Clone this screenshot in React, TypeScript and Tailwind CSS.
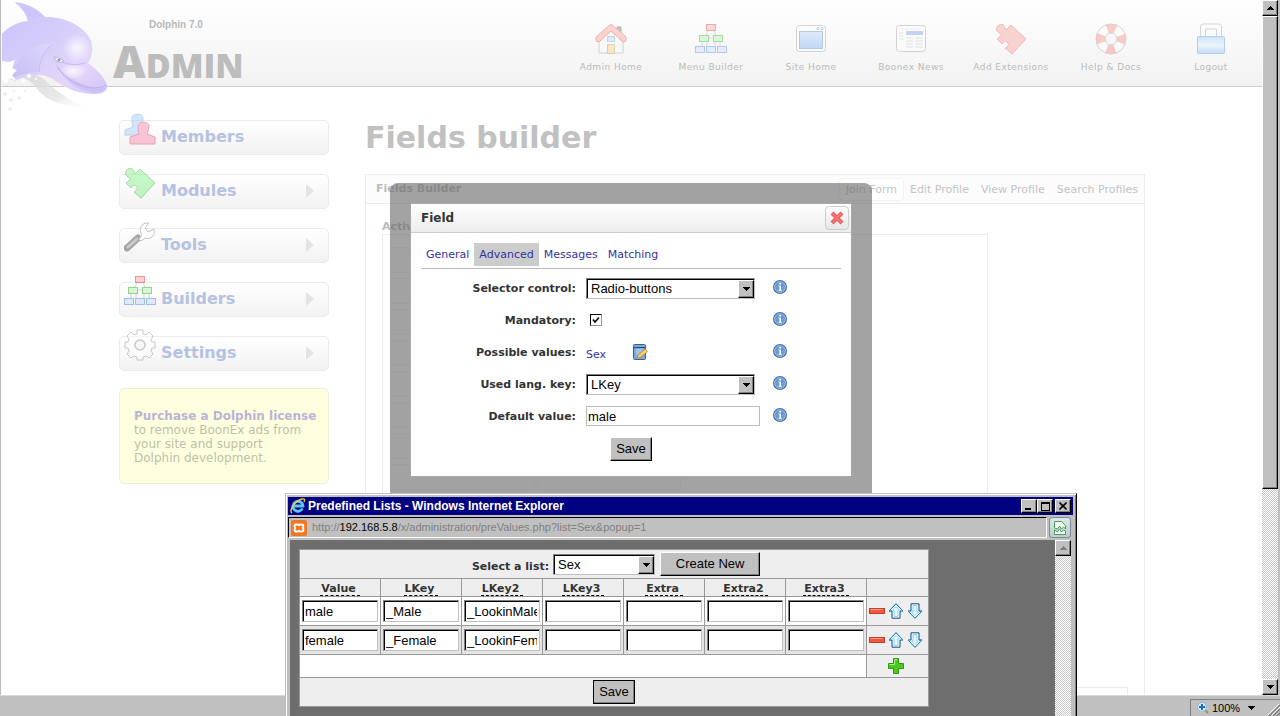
import React from 'react';

const FONT_PAGE = "font-['DejaVu_Sans',sans-serif]";
const FONT_WIN = "font-['Liberation_Sans',sans-serif]";

const BEVEL = 'border border-t-white border-l-white border-r-black border-b-black bg-[#c0c0c0] shadow-[inset_-1px_-1px_0_#808080]';
const DITHER = 'bg-[repeating-conic-gradient(#c8c8c8_0_25%,#fff_0_50%)] bg-[length:2px_2px]';
const SUNKEN = 'border border-t-[#808080] border-l-[#808080] border-r-[#c0c0c0] border-b-[#c0c0c0] bg-white shadow-[inset_1px_1px_0_#000]';

/* ---------- Icons ---------- */

const HouseIcon = () => (
  <svg viewBox="0 0 32 32" className="w-8 h-8">
    <path d="M22 4h4v7l-4-3z" fill="#777" stroke="#444" />
    <path d="M4 15L16 5l12 10v15H4z" fill="#fafafa" stroke="#999" />
    <path d="M16 1L1 14v4l3 1 12-11 12 11 3-1v-4z" fill="#f89a90" stroke="#d4483c" />
    <rect x="12.5" y="13.500" width="7" height="5" fill="#bcd7fa" stroke="#6a9be0" />
    <rect x="12.500" y="21.500" width="7" height="9" fill="#f3cf80" stroke="#c09040" />
  </svg>
);

const TreeIcon = () => (
  <svg viewBox="0 0 32 32" className="w-8 h-8">
    <path d="M13 8l-2 4M19 8l2 4M14 15h4M7 19v4M12 19v4M20 19v4M25 19v4" stroke="#aaa" fill="none" />
    <rect x="11.5" y="1.500" width="9" height="6" fill="#fba3a3" stroke="#d33" />
    <rect x="4.500" y="12.500" width="9" height="6" fill="#b0f0a8" stroke="#2da82d" />
    <rect x="18.500" y="12.500" width="9" height="6" fill="#b0f0a8" stroke="#2da82d" />
    <rect x="0.500" y="23.500" width="9" height="6" fill="#c4dcff" stroke="#4a84e0" />
    <rect x="11.500" y="23.500" width="9" height="6" fill="#c4dcff" stroke="#4a84e0" />
    <rect x="22.500" y="23.500" width="9" height="6" fill="#c4dcff" stroke="#4a84e0" />
  </svg>
);

const WindowIcon = () => (
  <svg viewBox="0 0 32 32" className="w-8 h-8">
    <defs>
      <linearGradient id="screen" x1="0" y1="0" x2="0" y2="1">
        <stop offset="0" stopColor="#b9d5ff" />
        <stop offset="1" stopColor="#6ba6f8" />
      </linearGradient>
    </defs>
    <rect x="1.500" y="2.500" width="29" height="26" rx="3" fill="#fff" stroke="#999" />
    <path d="M22 4.500h2v2h-2zM26 4.500h2v2h-2z" fill="none" stroke="#999" />
    <rect x="4.500" y="8.500" width="23" height="17" fill="url(#screen)" stroke="#5580c0" />
  </svg>
);

const NewsIcon = () => (
  <svg viewBox="0 0 32 32" className="w-8 h-8">
    <rect x="1.500" y="2.500" width="29" height="26" rx="3" fill="#fff" stroke="#999" />
    <path d="M4 6h22" stroke="#ddd" />
    <rect x="11" y="8" width="17" height="4" fill="#6c9ae0" />
    <path d="M4 10h4M4 13h4M5 16h3M11 15h7M20 15h8M11 18h7M20 18h8M11 21h7M20 21h8M11 24h7M20 24h8" stroke="#bbb" />
  </svg>
);

const PuzzleIcon = ({ fill, stroke }: { fill: string; stroke: string }) => (
  <svg viewBox="0 0 32 32" className="w-8 h-8">
    <path
      d="M16 2L31 16 17 31l-7-6c2-1 4-3 3-5-2-3-5-2-6 1l-5-5 5-4C5 10 0 9 2 4c2-4 8-3 8 1l1 2z"
      fill={fill}
      stroke={stroke}
      strokeLinejoin="round"
    />
  </svg>
);

const LifebuoyIcon = () => (
  <svg viewBox="0 0 32 32" className="w-8 h-8">
    <circle cx="16" cy="16" r="10.500" fill="none" stroke="#fff" strokeWidth="9" />
    <circle
      cx="16" cy="16" r="10.500" fill="none" stroke="#f5877c" strokeWidth="9"
      strokeDasharray="8.250 8.250" strokeDashoffset="4.120"
    />
    <circle cx="16" cy="16" r="15" fill="none" stroke="#b88" />
    <circle cx="16" cy="16" r="6" fill="#f5f5f5" stroke="#999" />
  </svg>
);

const LockIcon = () => (
  <svg viewBox="0 0 32 32" className="w-8 h-8">
    <defs>
      <linearGradient id="lock" x1="0" y1="0" x2="0" y2="1">
        <stop offset="0" stopColor="#8cc4ff" />
        <stop offset=".5" stopColor="#d6efff" />
        <stop offset="1" stopColor="#7eb2fa" />
      </linearGradient>
    </defs>
    <path d="M5.500 14V4q0-3 3-3h15q3 0 3 3v10h-5V6h-11v8z" fill="#fff" stroke="#999" />
    <rect x="2.500" y="13.500" width="27" height="17" rx="1" fill="url(#lock)" stroke="#4c88dc" />
  </svg>
);

const MembersIcon = () => (
  <svg viewBox="0 0 32 32" className="w-8 h-8">
    <path d="M8 5c0-5 11-5 11 0 0 4-1 6-2 9l4 2v6H1v-5l8-3C8 11 8 9 8 5z" fill="#a9d0f8" stroke="#7aa6dd" />
    <path d="M14 13c0-5 11-5 11 0 0 3-1 5-2 8l8 3v7H6v-7l9-3c-1-3-1-5-1-8z" fill="#f88fb0" stroke="#d8507c" />
  </svg>
);

const ToolsIcon = () => (
  <svg viewBox="0 0 32 32" className="w-8 h-8">
    <path d="M14 17L3 27" stroke="#555" strokeWidth="7" strokeLinecap="round" />
    <path d="M13 18L4 26" stroke="#999" strokeWidth="3" strokeLinecap="round" />
    <path
      d="M15 18l3-4c-4-5-1-13 7-12l-4 5 3 4 6-3c2 7-4 11-9 9l-4 3z"
      fill="#fff" stroke="#888" strokeLinejoin="round"
    />
  </svg>
);

const GearIcon = () => (
  <svg viewBox="0 0 32 32" className="w-8 h-8">
    <path
      d="M13 1h6v4l3 1 3-3 4 4-2 4 1 2h3v6h-3l-1 3 2 3-4 4-3-2-3 1v3h-6v-3l-3-1-3 2-4-4 2-3-1-3H1v-6h3l1-3-2-3 4-4 3 3 3-1z"
      fill="#fdfdfd" stroke="#999" strokeLinejoin="round"
    />
    <circle cx="16" cy="16" r="5" fill="#f3f3f3" stroke="#999" strokeWidth="1.500" />
  </svg>
);

const InfoIcon = () => (
  <svg viewBox="0 0 14 14" className="mb-[2px] w-[14px] h-[14px]">
    <circle cx="7" cy="7" r="7" fill="#426aa3" />
    <circle cx="7" cy="7" r="5.500" fill="#6a9ad4" stroke="#b4cdea" strokeWidth=".8" />
    <path d="M6.200 3h1.800v1.500H6.200zM5.500 5.700H8v4h1v1H5.500v-1h1v-3h-1z" fill="#fff" />
  </svg>
);

const EditIcon = () => (
  <svg viewBox="0 0 16 16" className="w-4 h-4">
    <rect x="1.500" y=".5" width="12" height="15" rx="1" fill="#7aabdc" stroke="#44617f" />
    <path d="M2 3.500h11" stroke="#254b74" />
    <path d="M4 6h7M4 8h6M4 10h4" stroke="#c3dcf4" />
    <path d="M5 14l1-3 7-6 2.500 2.500-7 6z" fill="#f8cf68" stroke="#b57b28" strokeWidth=".7" />
  </svg>
);

const IeIcon = () => (
  <svg viewBox="0 0 16 16" className="w-4 h-4">
    <path d="M12.500 10.500A5 5 0 1 1 13 8H4" fill="none" stroke="#5cc4f5" strokeWidth="2.800" />
    <path d="M2 15C-2 13 6 2 12 1c3-.5 3 1 2 3" fill="none" stroke="#f5c842" strokeWidth="1.400" />
  </svg>
);

const XamppIcon = () => (
  <svg viewBox="0 0 16 16" className="w-4 h-4">
    <rect width="16" height="16" rx="2" fill="#f37623" />
    <path
      d="M5 4.500h1.500q1.500 0 1.500 1.500 0-1.500 1.500-1.500H11q1.500 0 1.500 1.500T11 8q1.500 0 1.500 1.700T11 11.500H9.500Q8 11.500 8 10q0 1.500-1.500 1.500H5q-1.500 0-1.500-1.700T5 8Q3.500 8 3.500 6.200T5 4.500z"
      fill="none" stroke="#fff" strokeWidth="1.800"
    />
  </svg>
);

const BrokenPageIcon = () => (
  <svg viewBox="0 0 14 16" className="w-[14px] h-4">
    <path d="M1.500 8V1.500h7l4 4V9l-2-2-2 2-2-3-2 3z" fill="#f4fff4" stroke="#4d9a5c" />
    <path d="M1.500 10v4.500h11V11l-2-1-2 2-2-3-2 3z" fill="#f4fff4" stroke="#4d9a5c" />
  </svg>
);

const ArrowIcon = ({ down }: { down?: boolean }) => (
  <svg viewBox="0 0 16 16" className={down ? 'w-4 h-4 rotate-180' : 'w-4 h-4'}>
    <path d="M8 .8l7 7.200h-3v7.200H4V8H1z" fill="#fff" stroke="#0d4a7c" strokeLinejoin="round" />
    <path d="M8 3.500l3.500 3.500h-1.500v6.500H6V7H4.500z" fill="#e4f7ff" stroke="#5cc0f5" strokeWidth=".7" />
    <path d="M8 .8L1 8h3M8 .8L15 8" fill="none" stroke="#2490dc" />
  </svg>
);

const MinusIcon = () => (
  <svg viewBox="0 0 16 16" className="w-4 h-4">
    <rect x=".5" y="5.500" width="15" height="5" fill="#ee5a3c" stroke="#c04030" />
    <path d="M1.500 6.500h12" stroke="#ff9b80" />
  </svg>
);

const PlusIcon = () => (
  <svg viewBox="0 0 16 16" className="w-4 h-4">
    <path d="M5.500.5h5v5h5v5h-5v5h-5v-5h-5v-5h5z" fill="#4cc81e" stroke="#2c9a10" />
    <path d="M6.500 1.500v5h-5M9 1.500h-2" fill="none" stroke="#b4f08c" />
  </svg>
);

const Triangle = ({ dir = 'down', color = '#000' }: { dir?: 'up' | 'down'; color?: string }) => (
  <svg viewBox="0 0 7 4" className="w-[7px] h-1" shapeRendering="crispEdges">
    <path d={dir === 'up' ? 'M0 4h7L3.500 0z' : 'M0 0h7L3.500 4z'} fill={color} />
  </svg>
);

const DolphinLogo = () => (
  <svg viewBox="0 0 110 112" className="absolute left-0 top-0 w-[110px] h-[112px]">
    <defs>
      <linearGradient id="body" x1="0" y1="0" x2="1" y2="1">
        <stop offset="0" stopColor="#c9c2fc" />
        <stop offset=".45" stopColor="#d6cefa" />
        <stop offset=".75" stopColor="#e4d6f9" />
        <stop offset="1" stopColor="#cdc3fa" />
      </linearGradient>
      <linearGradient id="flipper" x1="1" y1="0" x2="0" y2="1">
        <stop offset="0" stopColor="#ddd8fc" />
        <stop offset="1" stopColor="#c6bdf4" />
      </linearGradient>
      <radialGradient id="shine">
        <stop offset="0" stopColor="#fff" stopOpacity=".8" />
        <stop offset="1" stopColor="#fff" stopOpacity="0" />
      </radialGradient>
      <linearGradient id="shade" x1="0" y1="0" x2="1" y2="1">
        <stop offset="0" stopColor="#d4d4d4" />
        <stop offset=".6" stopColor="#e4e4e4" />
        <stop offset="1" stopColor="#fff" stopOpacity="0" />
      </linearGradient>
    </defs>
    <path d="M18 76c12-4 22-1 29 7 12 12 26 20 46 25-28 0-46-6-56-18-5-7-11-12-19-14z" fill="url(#shade)" opacity=".8" />
    <path
      d="M1 34c6-7 15-12 26-13C25 13 20 7 14 2c13 2 23 7 30 15 19-1 37 9 44 20 5 8 4 18-1 26 8 6 16 13 19 22 1 6-5 9-12 9-15 0-28-5-38-12-5-4-11-7-18-7-8 0-15 2-25 6 0-4 0-8 2-12-4-1-8 0-14 6z"
      fill="url(#body)"
    />
    <path d="M44 17C36 9 27 4 14 2c6 5 11 11 13 18 6-2 11-3 17-3z" fill="#cdc6fb" />
    <path d="M16 64c5-12 17-20 34-20-8 9-13 19-13 28-9 0-20 3-27 8-1-5 1-11 6-16z" fill="url(#flipper)" />
    <path d="M38 72c0-10 5-20 12-27" fill="none" stroke="#c2b8ec" strokeWidth=".8" />
    <path d="M54 62c8 13 21 20 34 24 7 2 13 2 17 1-2 5-8 6-14 5-16-2-29-12-37-30z" fill="#c9bcf7" opacity=".7" />
    <ellipse cx="76" cy="48" rx="15" ry="15" fill="url(#shine)" />
    <ellipse cx="72" cy="71" rx="14" ry="8" fill="url(#shine)" />
    <path d="M84 63c-10 3-20 2-28-5" fill="none" stroke="#c0b3ea" strokeWidth=".8" />
    <path d="M53 57c4 0 7 2 10 4-4 3-8 1-10-4z" fill="#fff" stroke="#aaa3c6" strokeWidth=".8" />
    <circle cx="58" cy="60" r="1.500" fill="#9a90b4" />
    <path d="M56 67c7 10 18 17 28 20 8 2 16 1 21-2" fill="none" stroke="#b9abe6" strokeWidth=".8" />
    <g fill="#fff">
      <path d="M1 61l7 1 6-2-3 8 5 2-5 5 4 5-7-2-3 6-4-4z" />
      <circle cx="22" cy="81" r="2" />
      <circle cx="28" cy="76" r="2" />
      <circle cx="35" cy="79" r="1" />
    </g>
    <g fill="#edebfc">
      <circle cx="4" cy="94" r="2" />
      <circle cx="10" cy="100" r="2" />
      <circle cx="18" cy="98" r="2" />
      <circle cx="9" cy="109" r="2" />
      <circle cx="24" cy="91" r="1" />
      <circle cx="13" cy="91" r="1" />
    </g>
  </svg>
);

/* ---------- Data ---------- */

const topLinks = [
  { label: 'Admin Home', icon: <HouseIcon /> },
  { label: 'Menu Builder', icon: <TreeIcon /> },
  { label: 'Site Home', icon: <WindowIcon /> },
  { label: 'Boonex News', icon: <NewsIcon /> },
  { label: 'Add Extensions', icon: <PuzzleIcon fill="#f99a92" stroke="#d8645c" /> },
  { label: 'Help & Docs', icon: <LifebuoyIcon /> },
  { label: 'Logout', icon: <LockIcon /> },
];

const sideLinks = [
  { label: 'Members', icon: <MembersIcon />, arrow: false },
  { label: 'Modules', icon: <PuzzleIcon fill="#8cf090" stroke="#50b058" />, arrow: true },
  { label: 'Tools', icon: <ToolsIcon />, arrow: true },
  { label: 'Builders', icon: <TreeIcon />, arrow: true },
  { label: 'Settings', icon: <GearIcon />, arrow: true },
];

const columns = ['Value', 'LKey', 'LKey2', 'LKey3', 'Extra', 'Extra2', 'Extra3'];

const rows = [
  ['male', '_Male', '_LookinMale', '', '', '', ''],
  ['female', '_Female', '_LookinFemale', '', '', '', ''],
];

/* ---------- Controls ---------- */

interface SelectProps {
  id: string;
  value: string;
  className: string;
}

const ClassicSelect = ({ id, value, className }: SelectProps) => (
  <span className={`relative inline-block h-[21px] ${className}`}>
    <select id={id} defaultValue={value} className={`appearance-none block w-full h-full pt-px pl-1 text-[13px] leading-4 text-black rounded-none ${FONT_WIN} ${SUNKEN}`}>
      <option>{value}</option>
    </select>
    <span className={`pointer-events-none absolute right-px top-[2px] bottom-px w-4 flex items-center justify-center ${BEVEL}`}>
      <Triangle />
    </span>
  </span>
);

const ClassicButton = ({ children, className }: { children: React.ReactNode; className: string }) => (
  <button type="button" className={`h-6 text-[13px] leading-4 text-black ${FONT_WIN} ${BEVEL} ${className}`}>
    {children}
  </button>
);

interface FieldRowProps {
  label: string;
  htmlFor?: string;
  children: React.ReactNode;
}

const FieldRow = ({ label, htmlFor, children }: FieldRowProps) => (
  <div className="flex items-center h-8">
    <label htmlFor={htmlFor} className="w-[155px] pt-[2px] text-right text-[11px] font-bold text-[#333]">{label}</label>
    <div className="ml-[10px] w-[187px] flex items-center">{children}</div>
    <InfoIcon />
  </div>
);

/* ---------- Sections ---------- */

const Header = () => (
  <header className="relative h-[87px] flex bg-gradient-to-b from-white to-[#f2f2f2] border-b border-[#ccc]">
    <DolphinLogo />
    <div className="pl-28 pt-[18px]">
      <div className={`pl-9 pt-px text-[10px] leading-3 font-bold text-[#b8b8b8] ${FONT_WIN}`}>Dolphin 7.0</div>
      <div className="font-['Open_Sans',sans-serif] font-extrabold text-[#bcbcbc] text-[45px] leading-[60px]">
        A<span className="text-[34px]">DMIN</span>
      </div>
    </div>
    <nav className="ml-auto pr-px flex">
      {topLinks.map(l => (
        <a key={l.label} href="#" className="w-[100px] pt-[23px] flex flex-col items-center text-[9px] leading-3 tracking-wider text-[#bbb] whitespace-nowrap">
          <span className="opacity-40 mb-[6px]">{l.icon}</span>
          {l.label}
        </a>
      ))}
    </nav>
  </header>
);

const Sidebar = () => (
  <aside className="w-[210px] shrink-0">
    <nav className="flex flex-col gap-[19px]">
      {sideLinks.map(l => (
        <a
          key={l.label}
          href="#"
          className="h-[35px] flex items-center pb-[2px] pl-1 pr-[14px] border border-[#ebebeb] rounded-[5px] bg-gradient-to-b from-white to-[#f2f2f2] text-base font-bold text-[#b5c2e2]"
        >
          <span className="opacity-50 mb-4 mr-[5px]">{l.icon}</span>
          {l.label}
          {l.arrow && (
            <svg viewBox="0 0 8 14" className="ml-auto w-2 h-[14px]">
              <path d="M0 0l8 7-8 7z" fill="#e4e4e4" />
            </svg>
          )}
        </a>
      ))}
    </nav>
    <div className="mt-[17px] h-24 pl-[14px] pt-5 border border-[#eeeedd] rounded-[5px] bg-[#feffdf] text-xs leading-[14px] text-[#bfbfa8] whitespace-nowrap">
      <a href="#" className="block font-bold text-[#bdb3d6]">Purchase a Dolphin license</a>
      to remove BoonEx ads from<br />
      your site and support<br />
      Dolphin development.
    </div>
  </aside>
);

const BuilderPanel = () => (
  <section className="flex-1 min-w-0 flex flex-col">
    <h1 className="text-[30px] leading-9 font-bold text-[#c1c1c1]">Fields builder</h1>
    <div className="mt-[18px] flex-1 border border-b-0 border-[#ececec] text-[11px]">
      <div className="h-[29px] pt-px pl-[10px] flex items-center justify-between border-b border-[#ececec] bg-[#fcfcfc] text-[#c4c4c4]">
        <h2 className="font-bold text-[#bbb]">Fields Builder</h2>
        <nav className="flex">
          <a href="#" className="h-[23px] px-[6px] leading-[21px] border border-[#f3f3f3] rounded bg-white">Join Form</a>
          <a href="#" className="px-[6px] leading-[23px]">Edit Profile</a>
          <a href="#" className="px-[6px] leading-[23px]">View Profile</a>
          <a href="#" className="px-[6px] leading-[23px]">Search Profiles</a>
        </nav>
      </div>
      <div className="pl-4 pr-4 pt-[15px]">
        <h3 className="pt-px leading-[14px] font-bold text-[#bbb]">Active</h3>
        <div className="w-[606px] h-[440px] p-2 pt-3 border border-[#ececec] grid grid-cols-[144px_144px] content-start gap-x-[2px] gap-y-[5px]">
          {Array.from({ length: 16 }, (_, i) => (
            <div key={i} className="h-[26px] border border-[#f2f2f2] bg-[#fcfcfc]" />
          ))}
        </div>
        <div className="mt-[13px] h-10 border border-[#ececec]" />
      </div>
    </div>
  </section>
);

const FieldDialog = () => (
  <div className="absolute inset-x-0 top-[183px] flex justify-center">
    <div className="w-[482px] p-5 pb-6 rounded-lg bg-[#666]/60">
      <div role="dialog" aria-label="Field" className="border border-[#a8a8a8] bg-white h-[274px]">
        <div className="h-[29px] pl-[10px] pr-[2px] flex items-center justify-between border-b border-[#ccc] bg-gradient-to-b from-white to-[#ededed]">
          <h2 className="text-xs font-bold text-[#333]">Field</h2>
          <button type="button" aria-label="Close" className="w-6 h-6 flex items-center justify-center border border-[#ccc] rounded bg-gradient-to-b from-white to-[#e6e6e6]">
            <svg viewBox="0 0 14 14" className="w-[14px] h-[14px]">
              <path d="M2 2l10 10M12 2L2 12" stroke="#e9595c" strokeWidth="4" />
              <path d="M2.500 2.500l9 9M11.500 2.500l-9 9" stroke="#fb7577" strokeWidth="1.800" />
            </svg>
          </button>
        </div>
        <div className="px-[10px] pt-[10px]">
          <nav className="h-[26px] flex border-b border-[#bbb] text-[11px] leading-6 text-[#3333a0]">
            <a href="#" className="h-[23px] px-[5px]">General</a>
            <a href="#" className="h-[23px] px-[5px] bg-[#ccc]">Advanced</a>
            <a href="#" className="h-[23px] px-[5px]">Messages</a>
            <a href="#" className="h-[23px] px-[5px]">Matching</a>
          </nav>
          <form className="pt-[3px]">
            <FieldRow label="Selector control:" htmlFor="selector">
              <ClassicSelect id="selector" value="Radio-buttons" className="w-[169px]" />
            </FieldRow>
            <FieldRow label="Mandatory:" htmlFor="mandatory">
              <span className="relative ml-1 flex">
                <input id="mandatory" type="checkbox" defaultChecked className="peer appearance-none w-3 h-3 border border-t-black border-l-black border-r-[#999] border-b-[#999] bg-white" />
                <svg viewBox="0 0 12 12" className="pointer-events-none absolute inset-0 w-3 h-3 hidden peer-checked:block">
                  <path d="M3 5.500l2 2.500 4-4.500" fill="none" stroke="#000" strokeWidth="1.500" />
                </svg>
              </span>
            </FieldRow>
            <FieldRow label="Possible values:">
              <a href="#" className="pt-[6px] text-[11px] text-[#3333a0]">Sex</a>
              <button type="button" aria-label="Edit values" className="ml-[26px]"><EditIcon /></button>
            </FieldRow>
            <FieldRow label="Used lang. key:" htmlFor="langkey">
              <ClassicSelect id="langkey" value="LKey" className="w-[169px]" />
            </FieldRow>
            <FieldRow label="Default value:" htmlFor="default">
              <input id="default" type="text" defaultValue="male" className={`w-[174px] h-5 px-[1px] border border-[#bbb] text-[13px] text-black ${FONT_WIN}`} />
            </FieldRow>
            <div className="pt-[5px] flex justify-center">
              <ClassicButton className="w-[42px]">Save</ClassicButton>
            </div>
          </form>
        </div>
      </div>
    </div>
  </div>
);

const ListTable = () => (
  <table className="w-[630px] table-fixed border-collapse bg-[#eee] text-[11px] text-[#333]">
    <colgroup>
      {columns.map(c => <col key={c} className="w-[81px]" />)}
      <col />
    </colgroup>
    <tbody>
      <tr className="h-[29px]">
        <td colSpan={8} className="p-0 border border-[#999]">
          <div className="flex items-center justify-center pl-1">
            <label htmlFor="list" className="mr-1 pt-[6px] font-bold">Select a list:</label>
            <ClassicSelect id="list" value="Sex" className="w-[102px]" />
            <ClassicButton className="ml-[5px] w-[100px]">Create New</ClassicButton>
          </div>
        </td>
      </tr>
      <tr className="h-[18px]">
        {columns.map(c => (
          <th key={c} className="p-0 border border-[#999] leading-[14px] align-bottom">
            <span className="block w-fit mx-auto pt-[2px] pl-px pr-1 h-[17px] leading-4 border-b border-dashed border-black">{c}</span>
          </th>
        ))}
        <th className="p-0 border border-[#999]" />
      </tr>
      {rows.map((row, r) => (
        <tr key={row[0]} className="h-[29px]">
          {row.map((v, i) => (
            <td key={columns[i]} className={`p-0 border border-[#999] ${r % 2 ? 'bg-[#e4e4e4]' : 'bg-white'}`}>
              <input
                type="text"
                aria-label={`${columns[i]} ${row[0]}`}
                defaultValue={v}
                className={`block mx-auto w-[76px] h-[22px] px-[2px] pt-px text-[13px] text-black ${FONT_WIN} ${SUNKEN}`}
              />
            </td>
          ))}
          <td className="p-0 border border-[#999]">
            <div className="flex gap-[3px] pl-[2px]">
              <button type="button" aria-label="Delete"><MinusIcon /></button>
              <button type="button" aria-label="Move up"><ArrowIcon /></button>
              <button type="button" aria-label="Move down"><ArrowIcon down /></button>
            </div>
          </td>
        </tr>
      ))}
      <tr className="h-[23px]">
        <td colSpan={7} className="p-0 border border-[#999] bg-white" />
        <td className="p-0 border border-[#999]">
          <div className="flex justify-center pr-1">
            <button type="button" aria-label="Add"><PlusIcon /></button>
          </div>
        </td>
      </tr>
      <tr className="h-[29px]">
        <td colSpan={8} className="p-0 border border-[#999]">
          <div className="flex justify-center">
            <ClassicButton className="w-[42px] outline outline-1 -outline-offset-1 outline-black">Save</ClassicButton>
          </div>
        </td>
      </tr>
    </tbody>
  </table>
);

const PopupWindow = () => (
  <div className="absolute left-[285px] top-[493px] bottom-0 w-[792px] flex flex-col pt-[2px] px-[2px] bg-[#c0c0c0] border-t border-l border-t-[#c0c0c0] border-l-[#c0c0c0] border-r border-r-black shadow-[inset_1px_1px_0_#fff,inset_-1px_0_0_#808080]">
    <div className={`mt-px mr-px h-[18px] shrink-0 pl-[2px] pr-[2px] flex items-center bg-[#000080] text-white text-xs font-bold ${FONT_WIN}`}>
      <IeIcon />
      <span className="ml-[2px]">Predefined Lists - Windows Internet Explorer</span>
      <div className="ml-auto flex">
        <button type="button" aria-label="Minimize" className={`w-4 h-[14px] flex items-end pl-[3px] pb-[2px] ${BEVEL}`}>
          <span className="w-[6px] h-[2px] bg-black" />
        </button>
        <button type="button" aria-label="Maximize" className={`w-4 h-[14px] flex items-center justify-center ${BEVEL}`}>
          <span className="w-[9px] h-[9px] border border-t-2 border-black" />
        </button>
        <button type="button" aria-label="Close window" className={`ml-[2px] w-4 h-[14px] flex items-center justify-center ${BEVEL}`}>
          <svg viewBox="0 0 8 8" className="w-2 h-2"><path d="M.5.5l7 7M7.500.5l-7 7" stroke="#000" strokeWidth="1.600" /></svg>
        </button>
      </div>
    </div>
    <div className="h-[25px] shrink-0 pt-[2px] pb-[2px] pr-[3px] flex gap-[2px]">
      <div className={`flex-1 pl-[2px] flex items-center border border-t-black border-l-black border-r-white border-b-white text-[11px] text-[#808080] ${FONT_WIN}`}>
        <XamppIcon />
        <span className="ml-[5px]">http://<span className="text-black">192.168.5.8</span>/x/administration/preValues.php?list=Sex&amp;popup=1</span>
      </div>
      <button type="button" aria-label="Compatibility view" className="w-[22px] flex items-center justify-center border border-[#7c8a9c] rounded-[3px] bg-gradient-to-b from-[#dbe8e6] to-[#b9cfc9]">
        <BrokenPageIcon />
      </button>
    </div>
    <div className="flex-1 min-h-0 ml-[2px] mr-[3px] flex overflow-hidden bg-[#6e6e6e]">
      <div className="flex-1 pl-[9px] pt-[9px]">
        <ListTable />
      </div>
      <div className={`w-4 ${DITHER}`}>
        <div className={`h-4 flex items-center justify-center ${BEVEL}`}><Triangle dir="up" color="#808080" /></div>
      </div>
    </div>
  </div>
);

const PageScrollbar = () => (
  <div className="w-[18px] pr-[2px] bg-[#c0c0c0]">
    <div className={`h-full flex flex-col ${DITHER}`}>
      <div className={`h-4 flex items-center justify-center ${BEVEL}`}><Triangle dir="up" /></div>
      <div className={`h-[473px] ${BEVEL}`} />
      <div className={`mt-auto h-4 flex items-center justify-center ${BEVEL}`}><Triangle /></div>
    </div>
  </div>
);

const StatusBar = () => (
  <footer className={`h-[21px] shrink-0 pt-[3px] flex justify-end border-t border-[#d8d8d8] bg-[#c0c0c0] text-xs text-black ${FONT_WIN}`}>
    <div className="w-[90px] pl-[6px] flex items-center border-t border-l border-[#808080]">
      <svg viewBox="0 0 12 12" className="w-3 h-3">
        <path d="M7 7l4 4" stroke="#b8864a" strokeWidth="2" />
        <circle cx="5" cy="5" r="4.500" fill="#d4eaff" stroke="#8fb4dc" />
        <path d="M5 2v6M2 5h6" stroke="#1f6cc0" strokeWidth="2" />
      </svg>
      <span className="ml-[3px] mr-2 text-[11px]">100%</span>
      <Triangle />
      <svg viewBox="0 0 12 12" className="ml-auto mt-auto w-3 h-3">
        <path d="M1 12L12 1M5 12l7-7M9 12l3-3" stroke="#808080" strokeWidth="1.500" />
        <path d="M0 11L11 0M4 11l8-8" stroke="#fff" />
      </svg>
    </div>
  </footer>
);

const App: React.FC = () => (
  <div className={`relative h-screen flex flex-col overflow-hidden bg-white ${FONT_PAGE}`}>
    <div className="flex-1 min-h-0 flex">
      <div className="relative flex-1 min-w-0 overflow-hidden">
        <div className="h-full flex flex-col border-l border-[#bbb]">
          <Header />
          <main className="flex-1 flex gap-9 pl-[118px] pr-[117px] pt-[33px]">
            <Sidebar />
            <BuilderPanel />
          </main>
        </div>
        <FieldDialog />
      </div>
      <PageScrollbar />
    </div>
    <StatusBar />
    <PopupWindow />
  </div>
);

export default App;
